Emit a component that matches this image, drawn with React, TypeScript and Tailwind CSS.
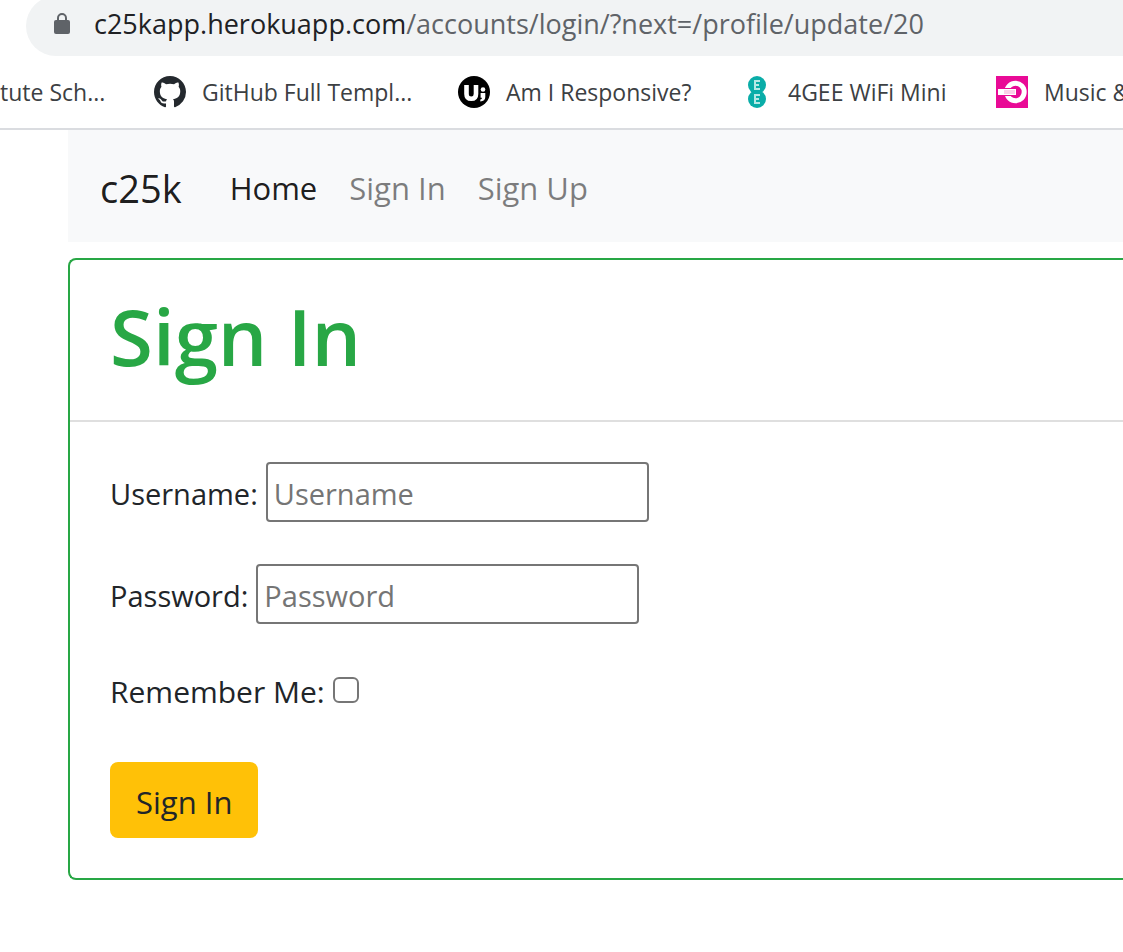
import type { ReactNode } from "react";

function LockIcon() {
  return (
    <svg viewBox="0 0 16 22" className="h-[22px] w-4 shrink-0" aria-hidden="true">
      <path d="M4 9V5a4 4 0 0 1 8 0v4" fill="none" stroke="#5f6368" strokeWidth="2" />
      <rect y="7" width="16" height="14" rx="2" fill="#5f6368" />
    </svg>
  );
}

function GitHubIcon() {
  return (
    <svg viewBox="0 0 16 16" className="size-8" fill="#24292e" aria-hidden="true">
      <path d="M8 0C3.58 0 0 3.58 0 8c0 3.54 2.29 6.53 5.47 7.59.4.07.55-.17.55-.38 0-.19-.01-.82-.01-1.49-2.01.37-2.53-.49-2.69-.94-.09-.23-.48-.94-.82-1.13-.28-.15-.68-.52-.01-.53.63-.01 1.08.58 1.23.82.72 1.21 1.87.87 2.33.66.07-.52.28-.87.51-1.07-1.78-.2-3.64-.89-3.64-3.95 0-.87.31-1.59.82-2.15-.08-.2-.36-1.02.08-2.12 0 0 .67-.21 2.2.82.64-.18 1.32-.27 2-.27s1.36.09 2 .27c1.53-1.04 2.2-.82 2.2-.82.44 1.1.16 1.92.08 2.12.51.56.82 1.27.82 2.15 0 3.07-1.87 3.75-3.65 3.95.29.25.54.73.54 1.48 0 1.07-.01 1.93-.01 2.2 0 .21.15.46.55.38A8.01 8.01 0 0 0 16 8c0-4.42-3.58-8-8-8z" />
    </svg>
  );
}

function ResponsiveIcon() {
  return (
    <svg viewBox="0 0 32 32" className="size-8" aria-hidden="true">
      <circle cx="16" cy="16" r="16" fill="#000" />
      <path d="M8.500 9v9c0 3.300 1.800 4.800 4.800 4.800s4.700-1.500 4.700-4.800V9" fill="none" stroke="#fff" strokeWidth="4.600" />
      <circle cx="25" cy="13.500" r="2.300" fill="#fff" />
      <path d="M22.600 17h4.700v4c0 2.800-1.700 4.300-5 4.500v-2c1.200-.2 1.600-.8 1.600-1.800h-1.300z" fill="#fff" />
    </svg>
  );
}

function EeIcon() {
  return (
    <svg viewBox="0 0 32 32" className="size-8" aria-hidden="true">
      <circle cx="17" cy="9" r="9" fill="#0aada8" />
      <circle cx="17" cy="23" r="9" fill="#0aada8" />
      <path
        d="M20 5h-5v8h5M15 9h4M20 19h-5v8h5M15 23h4"
        fill="none"
        stroke="#b5e8e5"
        strokeWidth="2"
      />
    </svg>
  );
}

function MusicIcon() {
  return (
    <svg viewBox="0 0 32 32" className="size-8" aria-hidden="true">
      <rect width="32" height="32" fill="#e90a96" />
      <circle cx="19.500" cy="16" r="8.700" fill="none" stroke="#fff" strokeWidth="5" />
      <rect x="1" y="12" width="19" height="8" fill="#e90a96" />
      <rect x="2" y="13" width="18" height="6" fill="#fff" />
      <rect x="8" y="14" width="11" height="4" fill="#fbd0e9" />
    </svg>
  );
}

function Bookmark({ icon, label }: { icon?: ReactNode; label: string }) {
  return (
    <li>
      <a href="#" className="flex items-center gap-4 whitespace-nowrap">
        {icon}
        <span>{label}</span>
      </a>
    </li>
  );
}

function BrowserBar() {
  return (
    <header className="overflow-hidden border-b-2 border-[#dadce0]">
      <div className="-mt-1 ml-[26px] flex h-[60px] items-center gap-6 rounded-l-full bg-[#f1f3f4] pb-1 pl-7">
        <LockIcon />
        <p className="whitespace-nowrap text-[27px] leading-9 text-[#5f6368]">
          <span className="text-[#202124]">c25kapp.herokuapp.com</span>
          /accounts/login/?next=/profile/update/20
        </p>
      </div>
      <nav aria-label="Bookmarks">
        <ul className="grid h-[72px] grid-cols-[154px_304px_282px_256px_auto] items-center text-[23px] leading-8 text-[#3c4043]">
          <Bookmark label="tute Sch..." />
          <Bookmark icon={<GitHubIcon />} label="GitHub Full Templ..." />
          <Bookmark icon={<ResponsiveIcon />} label="Am I Responsive?" />
          <Bookmark icon={<EeIcon />} label="4GEE WiFi Mini" />
          <Bookmark icon={<MusicIcon />} label="Music &" />
        </ul>
      </nav>
    </header>
  );
}

function SiteNav() {
  return (
    <nav aria-label="Main" className="flex h-28 items-center bg-[#f8f9fa] px-8 pt-1">
      <a href="#" className="mr-12 text-[38px] leading-[60px] text-black/90">
        c25k
      </a>
      <ul className="flex gap-8 text-[31px] leading-[48px] text-black/50">
        <li><a href="#" className="text-black/90">Home</a></li>
        <li><a href="#">Sign In</a></li>
        <li><a href="#">Sign Up</a></li>
      </ul>
    </nav>
  );
}

function Field({ id, label, type }: { id: string; label: string; type: string }) {
  return (
    <div className="flex items-center gap-2 text-[29px]">
      <label htmlFor={id} className="pt-1">{label}:</label>
      <input
        id={id}
        type={type}
        placeholder={label}
        className="h-[60px] w-[383px] rounded border-2 border-[#767676] bg-white px-1.5 pt-0.5 placeholder:text-[#757575]"
      />
    </div>
  );
}

function SignInCard() {
  return (
    <section className="mt-4 rounded-l-lg border-2 border-r-0 border-[#28a745]">
      <div className="border-b-2 border-[#dfdfdf] px-10 pt-7 pb-9">
        <h1 className="text-[78px] font-semibold leading-[96px] text-[#28a745]">Sign In</h1>
      </div>
      <form className="flex flex-col items-start p-10 leading-[48px]" onSubmit={(e) => e.preventDefault()}>
        <div className="flex flex-col gap-[42px]">
          <Field id="username" label="Username" type="text" />
          <Field id="password" label="Password" type="password" />
          <div className="flex h-12 items-center gap-2 text-[30px]">
            <label htmlFor="remember" className="pt-1">Remember Me:</label>
            <input
              id="remember"
              type="checkbox"
              className="size-[26px] appearance-none rounded-md border-2 border-[#767676] bg-white checked:bg-[#0075ff]"
            />
          </div>
        </div>
        <button type="submit" className="mt-12 rounded-lg bg-[#ffc107] px-[26px] pt-4 pb-3 text-[31px]">
          Sign In
        </button>
      </form>
    </section>
  );
}

export default function App() {
  return (
    <div className="min-h-screen overflow-x-hidden bg-white font-['Open_Sans','Noto_Sans',sans-serif] text-[#212529]">
      <BrowserBar />
      <main className="pb-18 pl-[68px]">
        <SiteNav />
        <SignInCard />
      </main>
    </div>
  );
}
